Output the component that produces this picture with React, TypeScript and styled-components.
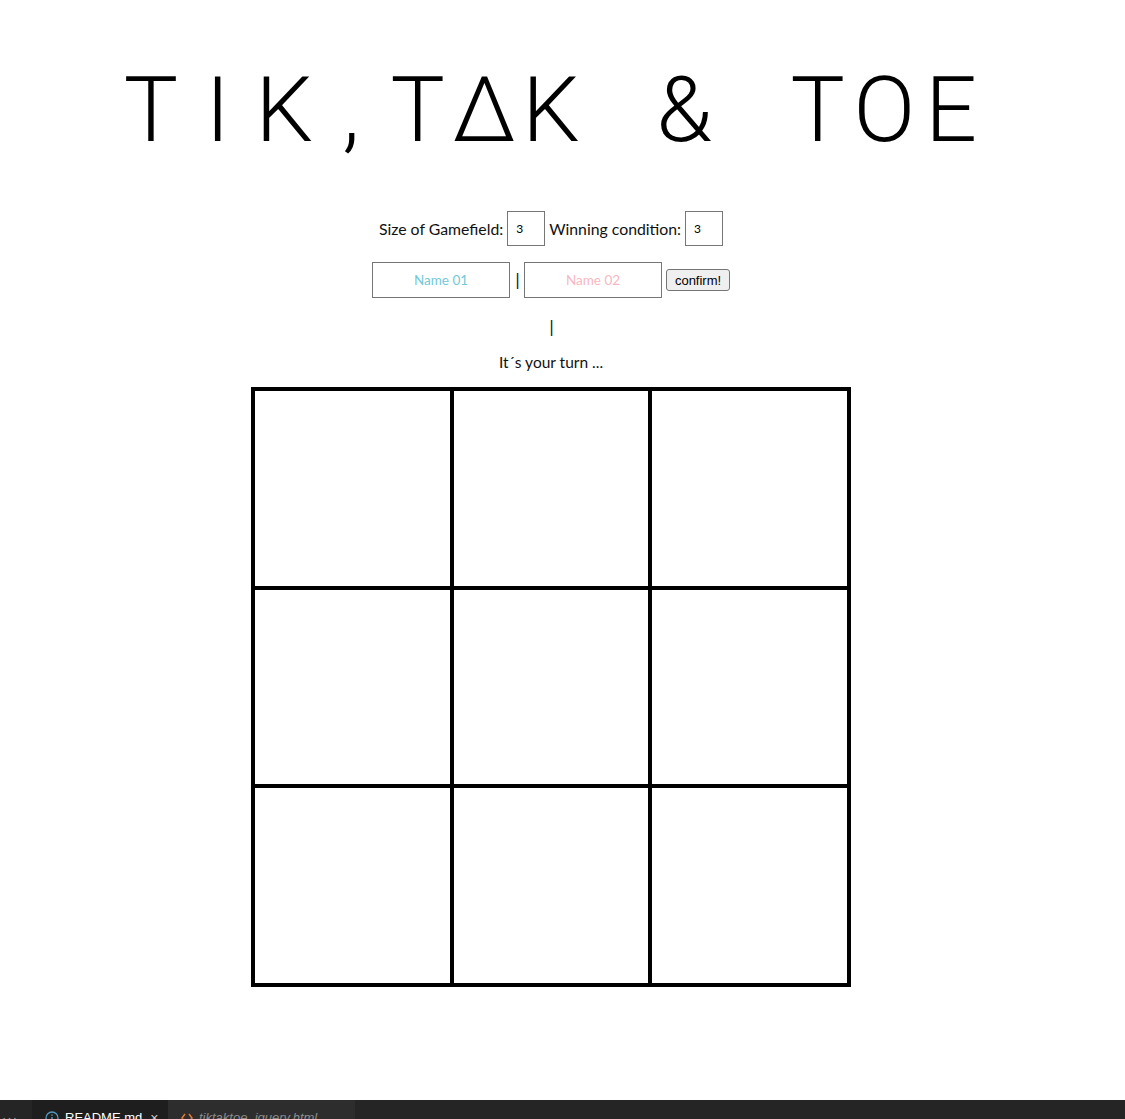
import React from "react";
import styled, { createGlobalStyle } from "styled-components";

const GlobalStyle = createGlobalStyle`
  html, body {
    margin: 0;
    padding: 0;
    background: #ffffff;
    overflow: hidden;
  }
  body {
    font-family: "Lato", "Noto Sans", sans-serif;
    color: #000;
    -webkit-font-smoothing: antialiased;
  }
`;

const Page = styled.div`
  min-height: 100vh;
  display: flex;
  flex-direction: column;
`;

const Main = styled.main`
  width: 1102px;
  display: flex;
  flex-direction: column;
  align-items: center;
`;

const Title = styled.h1`
  margin: 65px 0 0;
  display: flex;
  font-family: "Roboto", "DejaVu Sans", sans-serif;
  font-weight: 300;
  font-size: 91px;
  line-height: 91px;
  height: 91px;
`;

const Char = styled.span`
  width: 66.7px;
  text-align: center;
  white-space: pre;
`;

const SettingsRow = styled.div`
  margin-top: 55px;
  display: flex;
  align-items: center;
  gap: 4px;
  height: 35px;
`;

const Label = styled.label`
  font-size: 15.8px;
  color: #111;
`;

const NumberInput = styled.input`
  box-sizing: border-box;
  width: 38px;
  height: 35px;
  border: 1px solid #767676;
  border-radius: 0;
  padding: 0 0 0 8px;
  font-family: "Lato", sans-serif;
  font-size: 12px;
  color: #000;
  background: #fff;
  outline: none;
`;

const NameRow = styled.div`
  margin-top: 16px;
  display: flex;
  align-items: center;
  height: 36px;
`;

const NameInput = styled.input<{ $tint: string }>`
  box-sizing: border-box;
  width: 138px;
  height: 36px;
  border: 1px solid #767676;
  border-radius: 0;
  padding: 0;
  text-align: center;
  font-family: "Lato", sans-serif;
  font-size: 13.5px;
  background: #fff;
  outline: none;
  &::placeholder {
    color: ${(p) => p.$tint};
    opacity: 1;
  }
`;

const Divider = styled.span`
  font-family: "DejaVu Sans", sans-serif;
  font-size: 15px;
  margin: 0 4px 0 5px;
  color: #111;
`;

const ConfirmButton = styled.button`
  margin-left: 4px;
  box-sizing: border-box;
  width: 64px;
  height: 22px;
  padding: 0;
  border: 1px solid #767676;
  border-radius: 3px;
  background: #efefef;
  font-family: "Liberation Sans", Arial, sans-serif;
  font-size: 13px;
  color: #000;
`;

const StatusLine = styled.p`
  margin: 19px 0 0;
  padding-left: 1px;
  font-family: "DejaVu Sans", sans-serif;
  font-size: 15px;
  line-height: 20px;
  color: #111;
`;

const TurnLine = styled.p`
  margin: 15px 0 0;
  font-size: 15.5px;
  line-height: 20px;
  color: #111;
`;

const Board = styled.div`
  margin-top: 15px;
  box-sizing: border-box;
  width: 600px;
  height: 600px;
  border: 4px solid #000;
  background: #000;
  display: grid;
  grid-template-columns: repeat(3, 1fr);
  grid-template-rows: repeat(3, 1fr);
  gap: 4px;
`;

const Cell = styled.div`
  background: #fff;
`;

const TabBar = styled.div`
  margin-top: auto;
  height: 19px;
  overflow: hidden;
  display: flex;
  align-items: flex-start;
  background: #252526;
  font-family: "Liberation Sans", "Noto Sans", sans-serif;
  font-size: 13px;
`;

const More = styled.div`
  width: 32px;
  height: 35px;
  display: flex;
  align-items: center;
  padding-left: 2px;
  box-sizing: border-box;
  color: #9d9d9d;
  letter-spacing: 1px;
`;

const Tab = styled.div<{ $active?: boolean }>`
  box-sizing: border-box;
  height: 35px;
  width: ${(p) => (p.$active ? "136px" : "187px")};
  display: flex;
  align-items: center;
  gap: 6px;
  padding: 0 0 0 13px;
  background: ${(p) => (p.$active ? "#1e1e1e" : "#2d2d2d")};
  color: ${(p) => (p.$active ? "#ffffff" : "#8c8c8c")};
  font-style: ${(p) => (p.$active ? "normal" : "italic")};
`;

const Close = styled.span`
  margin-left: 2px;
  color: #cccccc;
  font-size: 14px;
`;

export default function App() {
  const title = "TIK,TΔK & TOE".split("");
  return (
    <Page>
      <GlobalStyle />
      <Main>
        <Title>
          {title.map((c, i) => (
            <Char key={i}>{c}</Char>
          ))}
        </Title>
        <SettingsRow>
          <Label>Size of Gamefield:</Label>
          <NumberInput type="text" defaultValue="3" />
          <Label>Winning condition:</Label>
          <NumberInput type="text" defaultValue="3" />
        </SettingsRow>
        <NameRow>
          <NameInput $tint="#72c9d6" placeholder="Name 01" />
          <Divider>|</Divider>
          <NameInput $tint="#f6b8c2" placeholder="Name 02" />
          <ConfirmButton>confirm!</ConfirmButton>
        </NameRow>
        <StatusLine>|</StatusLine>
        <TurnLine>It´s your turn ...</TurnLine>
        <Board>
          {Array.from({ length: 9 }).map((_, i) => (
            <Cell key={i} />
          ))}
        </Board>
      </Main>
      <TabBar>
        <More>···</More>
        <Tab $active>
          <svg width="14" height="14" viewBox="0 0 14 14">
            <circle cx="7" cy="7" r="6" fill="none" stroke="#519aba" strokeWidth="1.3" />
            <rect x="6.3" y="6" width="1.4" height="4.5" fill="#519aba" />
            <rect x="6.3" y="3.4" width="1.4" height="1.4" fill="#519aba" />
          </svg>
          <span>README.md</span>
          <Close>×</Close>
        </Tab>
        <Tab>
          <svg width="12" height="12" viewBox="0 0 12 12">
            <path d="M4 2 L1 6 L4 10 M8 2 L11 6 L8 10" fill="none" stroke="#e37933" strokeWidth="1.5" />
          </svg>
          <span>tiktaktoe_jquery.html</span>
        </Tab>
      </TabBar>
    </Page>
  );
}
